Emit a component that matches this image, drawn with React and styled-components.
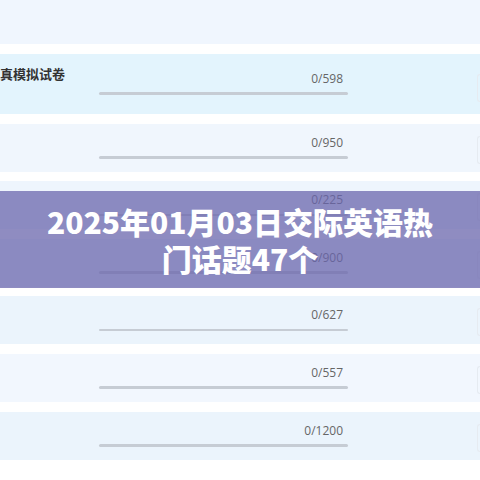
import React from "react";
import styled, { createGlobalStyle } from "styled-components";

const Global = createGlobalStyle`
  html, body { margin: 0; padding: 0; background: #ffffff; }
  body { font-family: "Open Sans", "Noto Sans CJK SC", sans-serif; }
  #root { width: 480px; height: 480px; overflow: hidden; }
`;

const Page = styled.div`
  position: relative;
  width: 480px;
  height: 480px;
  overflow: hidden;
  background: #ffffff;
`;

const List = styled.div`
  display: flex;
  flex-direction: column;
  gap: 9.6px;
`;

const Card = styled.div`
  display: grid;
  grid-template-columns: 99px 249px 1fr;
  height: ${(p) => p.$h}px;
  background: ${(p) => p.$bg};
`;

const Title = styled.div`
  padding-top: 11px;
  font-family: "Noto Sans CJK SC", sans-serif;
  font-weight: 700;
  font-size: 13px;
  line-height: 18px;
  color: #333333;
  white-space: nowrap;
`;

const Progress = styled.div`
  display: flex;
  flex-direction: column;
  padding-top: ${(p) => p.$top}px;
`;

const Count = styled.div`
  align-self: flex-end;
  padding-right: 5px;
  font-family: "Open Sans", sans-serif;
  font-size: 12px;
  line-height: 14px;
  color: #666666;
`;

const Bar = styled.div`
  margin-top: 6.5px;
  height: 2.5px;
  border-radius: 2px;
  background: #c6ccd4;
`;

const EdgeButton = styled.div`
  justify-self: end;
  align-self: center;
  width: 2px;
  height: 26px;
  margin-top: ${(p) => p.$shift}px;
  border: 1px solid #e6ebf1;
  border-right: none;
  border-radius: 13px 0 0 13px;
`;

const Banner = styled.div`
  position: absolute;
  left: 0;
  right: 0;
  top: 191px;
  height: 97px;
  display: flex;
  align-items: center;
  justify-content: center;
  background: rgba(106, 101, 172, 0.75);
`;

const BannerText = styled.h1`
  margin: 0;
  text-align: center;
  font-family: "Noto Sans CJK SC", sans-serif;
  font-weight: 900;
  font-size: 30px;
  line-height: 37px;
  color: #ffffff;
  white-space: nowrap;
`;

const rows = [
  { h: 44.4, bg: "#f0f6fe", count: null },
  { h: 60, bg: "#e3f4fd", title: "真模拟试卷", count: "0/598", top: 18 },
  { h: 48, bg: "#f0f6fd", count: "0/950", top: 12 },
  { h: 48, bg: "#eef5fd", count: "0/225", top: 12 },
  { h: 48, bg: "#eef5fd", count: "0/900", top: 12 },
  { h: 48, bg: "#ebf4fc", count: "0/627", top: 12 },
  { h: 48, bg: "#f2f7fe", count: "0/557", top: 12 },
  { h: 48, bg: "#ebf4fc", count: "0/1200", top: 12 },
];

export default function App() {
  return (
    <Page>
      <Global />
      <List>
        {rows.map((r, i) => (
          <Card key={i} $h={r.h} $bg={r.bg}>
            <div>{r.title && <Title>{r.title}</Title>}</div>
            {r.count ? (
              <Progress $top={r.top}>
                <Count>{r.count}</Count>
                <Bar />
              </Progress>
            ) : (
              <div />
            )}
            {r.count ? <EdgeButton $shift={r.title ? 8 : 4} /> : <div />}
          </Card>
        ))}
      </List>
      <Banner>
        <BannerText>
          2025年01月03日交际英语热
          <br />
          门话题47个
        </BannerText>
      </Banner>
    </Page>
  );
}
